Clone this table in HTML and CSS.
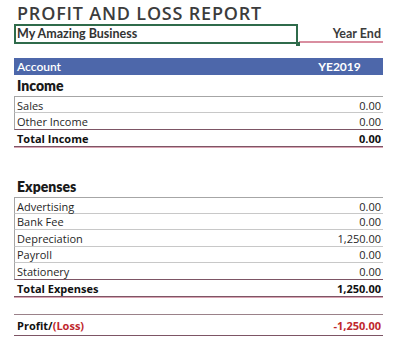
FILE: index.html
```html
<!DOCTYPE html>
<html>
<head>
<meta charset="utf-8">
<link rel="stylesheet" href="styles.css">
</head>
<body>
<div class="sheet">
  <div class="title">PROFIT AND LOSS REPORT</div>
  <div class="top">
    <div class="biz">My Amazing Business<span class="handle"></span></div>
    <div class="yearend">Year End</div>
  </div>
  <div class="header"><span class="acc">Account</span><span class="ye">YE2019</span></div>
  <div class="heading h-income">Income</div>
  <div class="row detail first"><span>Sales</span><span>0.00</span></div>
  <div class="row detail last"><span>Other Income</span><span>0.00</span></div>
  <div class="row total"><span>Total Income</span><span>0.00</span></div>
  <div class="heading h-exp">Expenses</div>
  <div class="row detail first"><span>Advertising</span><span>0.00</span></div>
  <div class="row detail short"><span>Bank Fee</span><span>0.00</span></div>
  <div class="row detail"><span>Depreciation</span><span>1,250.00</span></div>
  <div class="row detail short"><span>Payroll</span><span>0.00</span></div>
  <div class="row detail last"><span>Stationery</span><span>0.00</span></div>
  <div class="row total"><span>Total Expenses</span><span>1,250.00</span></div>
  <div class="row profit"><span>Profit/<span class="red">(Loss)</span></span><span class="red">-1,250.00</span></div>
</div>
</body>
</html>
```
FILE: styles.css
```css
html, body {
  margin: 0;
  padding: 0;
  background: #ffffff;
}
.sheet {
  width: 369px;
  margin-left: 14px;
  font-family: Lato, "Open Sans", sans-serif;
  font-size: 12px;
  color: #1f1f1f;
}
.title {
  height: 24px;
  line-height: 26px;
  padding-left: 3px;
  font-family: "Open Sans", sans-serif;
  font-size: 18px;
  font-weight: 600;
  color: #3c3c3c;
  letter-spacing: 0.8px;
}
.top {
  display: flex;
  height: 20px;
}
.biz {
  position: relative;
  width: 279px;
  border: 2px solid #2f6b4b;
  padding-left: 1px;
  line-height: 16px;
  font-weight: 700;
  font-size: 12.5px;
  color: #333;
}
.handle {
  position: absolute;
  right: -4px;
  bottom: -4px;
  width: 4px;
  height: 4px;
  background: #2f6b4b;
}
.yearend {
  flex: 1;
  text-align: right;
  padding-right: 2px;
  line-height: 19px;
  height: 17px;
  border-bottom: 2px solid #d98ea0;
  font-weight: 700;
  font-size: 12.5px;
  color: #3c3c3c;
  margin-left: 1px;
}
.header {
  margin-top: 14px;
  height: 17px;
  background: #4d67aa;
  color: #fff;
  display: grid;
  grid-template-columns: 1fr 87px;
  line-height: 17px;
}
.acc {
  padding-left: 3px;
  font-weight: 600;
}
.ye {
  text-align: center;
  font-weight: 700;
}
.heading {
  font-weight: 800;
  font-size: 14px;
  color: #1a1a1a;
  padding-left: 3px;
}
.h-income {
  height: 21px;
  line-height: 22px;
}
.h-exp {
  margin-top: 28px;
  height: 22px;
  line-height: 23px;
}
.row {
  display: flex;
  justify-content: space-between;
  height: 17px;
  line-height: 17px;
  padding: 0 2px 0 3px;
  box-sizing: border-box;
  font-family: "Open Sans", sans-serif;
  font-size: 11px;
}
.detail {
  border-left: 1px solid #a6a6a6;
  border-bottom: 1px solid #c8c8c8;
  padding-left: 2px;
}
.detail.first {
  border-top: 1px solid #a6a6a6;
  height: 17px;
}
.detail.short {
  height: 16px;
  line-height: 16px;
}
.detail.last {
  border-bottom: 1px solid #7d5565;
}
.total {
  font-weight: 700;
  color: #111;
  border-bottom: 1px solid #7d5565;
  box-shadow: 0 1px 0 #d9a3b2;
  line-height: 18px;
}
.profit {
  margin-top: 17px;
  height: 22px;
  line-height: 22px;
  font-weight: 700;
  color: #111;
  border-top: 1px solid #9a8189;
  border-bottom: 1px solid #7d5565;
  box-shadow: 0 1px 0 #d9a3b2;
}
.red {
  color: #c0272d;
}
```
